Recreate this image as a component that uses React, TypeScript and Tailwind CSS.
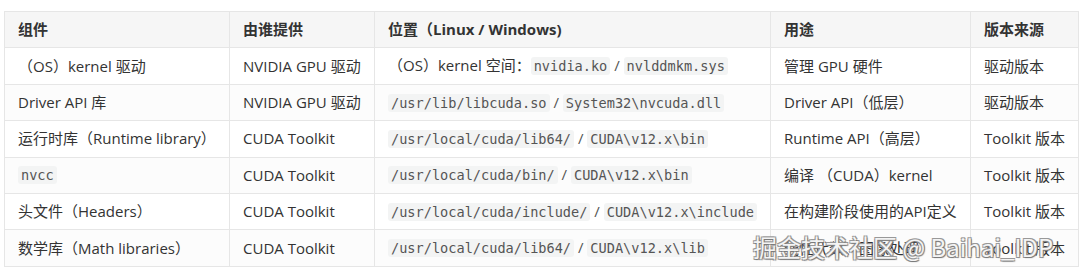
import React from "react";

type Cell = string | { code: string[]; prefix?: string };

const rows: Cell[][] = [
  ["（OS）kernel 驱动", "NVIDIA GPU 驱动", { prefix: "（OS）kernel 空间：", code: ["nvidia.ko", "nvlddmkm.sys"] }, "管理 GPU 硬件", "驱动版本"],
  ["Driver API 库", "NVIDIA GPU 驱动", { code: ["/usr/lib/libcuda.so", "System32\\nvcuda.dll"] }, "Driver API（低层）", "驱动版本"],
  ["运行时库（Runtime library）", "CUDA Toolkit", { code: ["/usr/local/cuda/lib64/", "CUDA\\v12.x\\bin"] }, "Runtime API（高层）", "Toolkit 版本"],
  [{ code: ["nvcc"] }, "CUDA Toolkit", { code: ["/usr/local/cuda/bin/", "CUDA\\v12.x\\bin"] }, "编译 （CUDA）kernel", "Toolkit 版本"],
  ["头文件（Headers）", "CUDA Toolkit", { code: ["/usr/local/cuda/include/", "CUDA\\v12.x\\include"] }, "在构建阶段使用的API定义", "Toolkit 版本"],
  ["数学库（Math libraries）", "CUDA Toolkit", { code: ["/usr/local/cuda/lib64/", "CUDA\\v12.x\\lib"] }, "线性代数、图像处理", "Toolkit 版本"],
];

const headers = ["组件", "由谁提供", "位置（Linux / Windows)", "用途", "版本来源"];
const widths = ["w-[225px]", "w-[145px]", "w-[393px]", "w-[200px]", "w-[107px]"];

const Code = ({ children }: { children: string }) => (
  <code
    className="rounded-[3px] bg-[#f3f4f4] px-[3px] py-[1px] text-[13.6px] text-[#555]"
    style={{ fontFamily: '"DejaVu Sans Mono", "Liberation Mono", monospace' }}
  >
    {children}
  </code>
);

const renderCell = (c: Cell) => {
  if (typeof c === "string") return c;
  return (
    <>
      {c.prefix}
      {c.code.map((s, i) => (
        <React.Fragment key={i}>
          {i > 0 && <span className="text-[#555]"> / </span>}
          <Code>{s}</Code>
        </React.Fragment>
      ))}
    </>
  );
};

export default function App() {
  return (
    <div
      className="relative h-[274px] w-[1080px] bg-white pl-[4px] pt-[11px] text-[15px] text-[#333]"
      style={{ fontFamily: '"Open Sans", "Noto Sans CJK SC", sans-serif' }}
    >
      <table className="border-collapse">
        <thead>
          <tr className="bg-[#f6f6f6]">
            {headers.map((h, i) => (
              <th
                key={i}
                className={`${widths[i]} h-[36.4px] border border-[#e6e6e6] px-[13px] text-left font-bold`}
              >
                {h}
              </th>
            ))}
          </tr>
        </thead>
        <tbody>
          {rows.map((r, ri) => (
            <tr key={ri} className={ri % 2 === 1 ? "bg-[#fcfcfc]" : "bg-white"}>
              {r.map((c, ci) => (
                <td
                  key={ci}
                  className="h-[36.4px] whitespace-nowrap border border-[#e6e6e6] px-[13px] py-0 leading-none"
                >
                  {renderCell(c)}
                </td>
              ))}
            </tr>
          ))}
        </tbody>
      </table>
      <div
        className="absolute left-[753px] top-[231px] whitespace-nowrap text-[24px] leading-[32px] text-[#f4f4f4]"
        style={{
          fontFamily: '"Noto Sans CJK SC", sans-serif',
          textShadow: "1px 1px 1px #777, -1px -1px 0 #999, 1px -1px 0 #999, -1px 1px 0 #999",
        }}
      >
        掘金技术社区 @ Baihai_IDP
      </div>
    </div>
  );
}
